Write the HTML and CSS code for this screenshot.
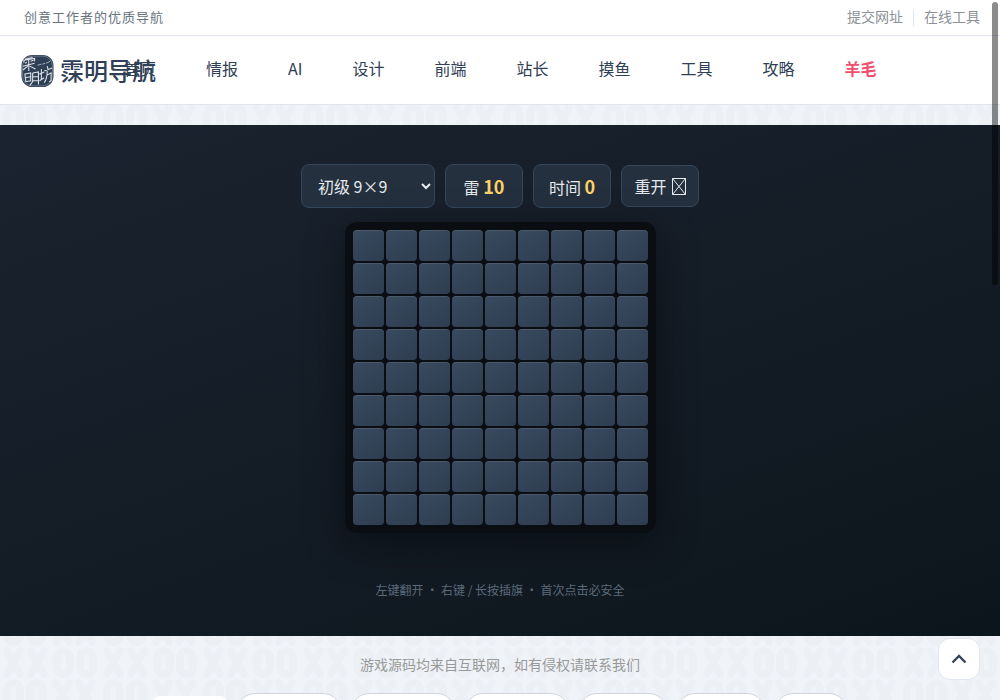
FILE: index.html
```html
<!DOCTYPE html>
<html lang="zh-CN">
<head>
<meta charset="utf-8">
<title>霂明导航</title>
<link rel="stylesheet" href="styles.css">
</head>
<body>
<svg class="backdrop" aria-hidden="true">
  <defs>
    <pattern id="xo" width="100" height="64" patternUnits="userSpaceOnUse" y="7">
      <g fill="none" stroke="#ecf0f5" stroke-width="7.500" stroke-linecap="round">
        <path d="M7 4L20 27M20 4L7 27M31 4L44 27M44 4L31 27"/>
        <rect x="57" y="4" width="13" height="23" rx="6"/><rect x="80" y="4" width="13" height="23" rx="6"/>
        <rect x="7" y="36" width="13" height="23" rx="6"/><rect x="30" y="36" width="13" height="23" rx="6"/>
        <path d="M56 36L69 59M69 36L56 59M79 36L92 59M92 36L79 59"/>
      </g>
    </pattern>
  </defs>
  <rect width="100%" height="100%" fill="url(#xo)"/>
</svg>
<header>
  <div class="topbar">
    <span class="slogan">创意工作者的优质导航</span>
    <nav class="toplinks"><a><span>提交网址</span></a><a><span>在线工具</span></a></nav>
  </div>
  <div class="mainbar">
    <a class="brand">
      <svg class="seal" viewBox="0 0 34 34">
        <rect x=".5" y=".5" width="33" height="33" rx="11" fill="#2f4056"/>
        <rect x="1.7" y="1.7" width="30.6" height="30.6" rx="10" fill="none" stroke="#8f9aa7" stroke-width=".6"/>
        <g fill="none" stroke="#dde2e7" stroke-width="1.1">
          <path d="M4 5l8-2M3 8V6l11-2v3M8 4v5M4 9l2-1M10 7l3-1M2 12l12-3M8 9v8M7 12l-5 4M9 12l6 3"/>
          <path d="M17 11l4-1M22 10l3-1M26 9l4-2" stroke-width=".7"/>
          <path d="M4 20l6-1v8l-5 1zM4 24l6-1M12 19l6-1v13M12 19v9l-3 4M12 23h6M12 27h6"/>
          <path d="M19 20l5-2M21 15v11M19 27l5-3M24 17l8-3M27 12l1 4M27 17c0 5 0 8-3 12M27 21l4-2v8l-2 1"/>
        </g>
      </svg>
      <span class="brand-name">霂明导航</span>
    </a>
    <nav class="menu">
      <a>首页</a><a>情报</a><a>AI</a><a>设计</a><a>前端</a><a>站长</a><a>摸鱼</a><a>工具</a><a>攻略</a><a class="hot">羊毛</a>
    </nav>
  </div>
</header>
<main class="game">
  <div class="controls">
    <div class="control level"><span>初级 9×9</span><svg width="10" height="7" viewBox="0 0 10 7"><path d="M1 1l4 4 4-4" fill="none" stroke="#e8edf2" stroke-width="2"/></svg></div>
    <div class="control stat">雷&nbsp;<b>10</b></div>
    <div class="control stat">时间&nbsp;<b>0</b></div>
    <div class="control restart">重开<svg width="14" height="17" viewBox="0 0 14 17"><path d="M.5.5h13v16H.5zM.5.5l13 16M13.500.5l-13 16" fill="none" stroke="#e6e9ed"/></svg></div>
  </div>
  <div class="board" id="board"></div>
  <p class="hint">左键翻开 ・ 右键 / 长按插旗 ・ 首次点击必安全</p>
</main>
<footer>
  <p class="notice">游戏源码均来自互联网，如有侵权请联系我们</p>
  <div class="pills"><i class="pill active"></i><i class="pill large"></i><i class="pill large"></i><i class="pill large"></i><i class="pill medium"></i><i class="pill medium"></i><i class="pill small"></i></div>
</footer>
<a class="to-top"><svg width="16" height="10" viewBox="0 0 16 10"><path d="M1.500 8.500L8 2l6.500 6.500" fill="none" stroke="#344258" stroke-width="2.300"/></svg></a>
<div class="scroll-thumb"></div>
<script src="board.js"></script>
</body>
</html>
```
FILE: styles.css
```css
* { box-sizing: border-box; }
body {
  margin: 0;
  height: 700px;
  overflow: hidden;
  position: relative;
  background: #f0f3f8;
  color: #2f4056;
  font-family: "Noto Sans CJK SC", sans-serif;
}
.backdrop { position: absolute; inset: 0; width: 100%; height: 100%; z-index: -1; }
header { height: 105px; background: #fff; border-bottom: 1px solid #e2e6ef; }
.topbar {
  height: 36px;
  padding: 0 20px 0 24px;
  display: flex;
  justify-content: space-between;
  align-items: center;
  border-bottom: 1px solid #e2e6ef;
  font-size: 14px;
}
.slogan { padding-bottom: 2px; font-size: 13px; letter-spacing: 1px; color: #697380; }
.toplinks { display: flex; align-items: center; color: #8c9196; }
.toplinks a { height: 16px; display: flex; align-items: center; }
.toplinks span { padding-bottom: 3px; }
.toplinks a + a { margin-left: 10px; padding-left: 10px; border-left: 1px solid #e2e6ef; }
.mainbar { height: 68px; padding-left: 21px; display: flex; align-items: center; }
.brand { width: 103px; flex: none; display: flex; align-items: center; white-space: nowrap; padding-top: 1px; }
.seal { width: 33px; height: 34px; flex: none; }
.brand-name { margin-left: 6px; padding-bottom: 2px; font-size: 24px; font-weight: 500; line-height: 34px; }
.menu { display: flex; gap: 50px; font-size: 16px; line-height: 24px; padding-bottom: 4px; }
.hot { color: #f0506e; font-weight: 700; }
.game {
  height: 511px;
  margin-top: 20px;
  padding-top: 39px;
  display: flex;
  flex-direction: column;
  align-items: center;
  background: linear-gradient(160deg, #1b2330, #0d151c);
}
.controls { display: flex; align-items: center; gap: 10px; height: 44px; }
.control {
  height: 44px;
  border: 1px solid #34475b;
  border-radius: 8px;
  background: #24303e;
  color: #e6e9ed;
  font-size: 16px;
  display: flex;
  align-items: center;
  justify-content: center;
}
.level { width: 134px; padding: 0 3px 0 16px; justify-content: space-between; }
.stat { width: 78px; align-items: baseline; line-height: 42px; }
.stat b { color: #ffd166; font-size: 18px; }
.restart { width: 78px; height: 42px; margin-bottom: 1px; gap: 5px; }
.restart svg { margin-top: 2px; }
.board {
  margin-top: 14px;
  padding: 8px;
  display: grid;
  grid-template-columns: repeat(9, 31px);
  grid-auto-rows: 31px;
  gap: 2px;
  border-radius: 12px;
  background: #0a0d12;
  box-shadow: 0 10px 40px rgba(0, 0, 0, .4);
}
.cell {
  border-radius: 4px;
  background: linear-gradient(145deg, #3a4a5f, #2e3d50);
  box-shadow: inset 0 1px rgba(255, 255, 255, .1);
}
.hint { margin: 48px 0 0; font-size: 12px; line-height: 18px; color: #5c6b7b; }
footer { height: 64px; overflow: hidden; }
.notice { margin: 17px 0 0; text-align: center; font-size: 14px; line-height: 22px; color: #999; }
.pills { display: flex; justify-content: center; gap: 10px; padding-top: 18px; }
.pill { flex: none; height: 40px; border: 1px solid #d0d5df; border-radius: 18px; background: #fff; }
.active { width: 74px; margin-top: 3px; border: 0; border-radius: 7px; }
.large { width: 104px; }
.medium { width: 88px; }
.small { width: 72px; }
.to-top {
  position: absolute;
  left: 938px;
  top: 638px;
  width: 42px;
  height: 42px;
  border: 1px solid #e2e6ef;
  border-radius: 12px;
  background: #fff;
  display: flex;
  align-items: center;
  justify-content: center;
}
.scroll-thumb {
  position: absolute;
  top: 2px;
  right: 2px;
  width: 6px;
  height: 283px;
  border-radius: 3px;
  background: rgba(0, 0, 0, .45);
}
```
FILE: board.js
```js
const board = document.getElementById("board");
for (let i = 0; i < 81; i++) {
  const cell = document.createElement("div");
  cell.className = "cell";
  board.append(cell);
}
```
